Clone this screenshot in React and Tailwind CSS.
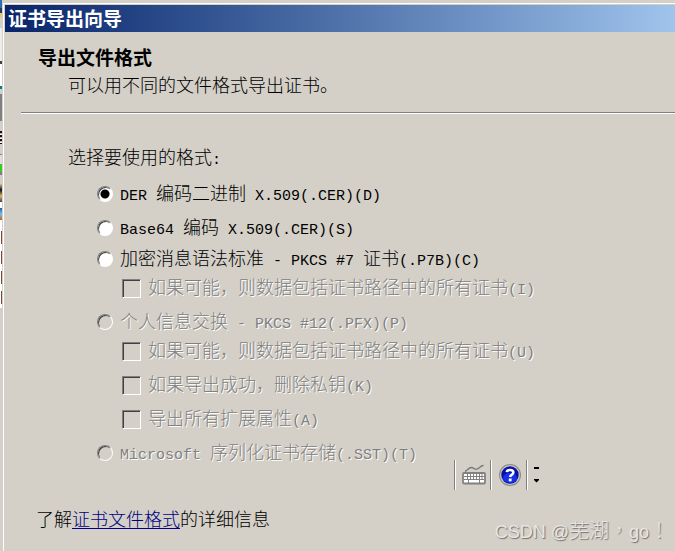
import React from "react";

const LATIN = /([\x20-\x7e]+)/;

// Latin runs are half as wide as the Chinese characters beside them.
function Mixed({ children }) {
  return children.split(LATIN).map((part, i) =>
    i % 2 ? (
      <span key={i} className="whitespace-pre font-['Liberation_Mono',monospace] text-[15px]">
        {part}
      </span>
    ) : (
      part
    )
  );
}

const OPTIONS = [
  { id: "der", type: "radio", label: "DER 编码二进制 X.509(.CER)(D)", checked: true, gap: "" },
  { id: "base64", type: "radio", label: "Base64 编码 X.509(.CER)(S)", gap: "mt-[14px]" },
  { id: "pkcs7", type: "radio", label: "加密消息语法标准 - PKCS #7 证书(.P7B)(C)", gap: "mt-[11px]" },
  { id: "pkcs7-chain", type: "checkbox", label: "如果可能，则数据包括证书路径中的所有证书(I)", disabled: true, gap: "mt-[9px]" },
  { id: "pfx", type: "radio", label: "个人信息交换 - PKCS #12(.PFX)(P)", disabled: true, gap: "mt-[14px]" },
  { id: "pfx-chain", type: "checkbox", label: "如果可能，则数据包括证书路径中的所有证书(U)", disabled: true, gap: "mt-[9px]" },
  { id: "pfx-delete", type: "checkbox", label: "如果导出成功，删除私钥(K)", disabled: true, gap: "mt-[14px]" },
  { id: "pfx-props", type: "checkbox", label: "导出所有扩展属性(A)", disabled: true, gap: "mt-[14px]" },
  { id: "sst", type: "radio", label: "Microsoft 序列化证书存储(.SST)(T)", disabled: true, gap: "mt-[14px]" },
];

function Option({ id, type, label, checked, disabled, gap }) {
  const radio = type === "radio";
  return (
    <div className={`flex h-5 items-center gap-[7px] ${gap} ${radio ? "pl-[92px]" : "pl-[117px]"}`}>
      <input
        id={id}
        type={type}
        name={radio ? "format" : id}
        defaultChecked={checked}
        disabled={disabled}
        className={
          radio
            ? "size-4 shrink-0 appearance-none rounded-full border border-t-[#808080] border-l-[#808080] border-r-white border-b-white bg-white shadow-[inset_1px_1px_0_#404040] checked:bg-[radial-gradient(circle,#000_4px,#fff_5px)] disabled:bg-[#d4d0c8]"
            : "size-[19px] shrink-0 appearance-none border border-t-[#808080] border-l-[#808080] border-r-white border-b-white bg-[#d4d0c8] shadow-[inset_1px_1px_0_#404040]"
        }
      />
      <label
        htmlFor={id}
        className={`whitespace-nowrap ${disabled ? "text-[#808080] [text-shadow:1px_1px_0_#fff]" : ""}`}
      >
        <Mixed>{label}</Mixed>
      </label>
    </div>
  );
}

// Sliver of the desktop that shows to the left of the dialog.
const SLIVERS = [
  ["h-[8px]", "bg-[#2a6fb0]"],
  ["h-[5px]", "bg-[#1c3f6e]"],
  ["h-[4px]", "bg-[#e8c860]"],
  ["h-[11px]", "bg-[#d4d0c8]"],
  ["h-[33px]", "bg-[#f0eeea]"],
  ["h-[3px]", "bg-[#404040]"],
  ["h-[22px]", "bg-white"],
  ["h-[3px]", "bg-[#008080]"],
  ["h-[5px]", "bg-[#d4d0c8]"],
  ["h-[27px]", "bg-[#808080]"],
  ["h-[10px]", "bg-[#d4d0c8]"],
  ["h-[13px]", "bg-[repeating-linear-gradient(#101030_0_2px,#d8a868_2px_3px,#fff_3px_4px)]"],
  ["h-[10px]", "bg-[#d4d0c8]"],
  ["h-[1px]", "bg-[#808080]"],
  ["h-[9px]", "bg-[#e0dede]"],
  ["h-[8px]", "bg-[#3cc828]"],
  ["h-[3px]", "bg-[#808080]"],
  ["h-[9px]", "bg-[#d4d0c8]"],
  ["h-[18px]", "bg-[linear-gradient(#e8c070,#101030,#e8b850,#304080)]"],
  ["h-[6px]", "bg-white"],
  ["h-[12px]", "bg-[linear-gradient(#2858a0,#70c0f0,#d06020)]"],
  ["h-[8px]", "bg-white"],
];

function Grip() {
  return <span className="h-[30px] w-[2px] border-l border-[#808080] bg-white" />;
}

function LanguageBar() {
  return (
    <div className="absolute top-[460px] left-[454px] flex items-center">
      <Grip />
      <button type="button" aria-label="键盘" className="ml-[5px]">
        <svg width="26" height="22" viewBox="0 0 26 22" fill="none">
          <path d="M4 7.5C6 7 7.5 3.5 10.5 3.5C13 3.5 13 5.5 15.5 5.2C18.5 5 19.5 1.2 22.5 1.5" stroke="#777" strokeWidth="1.3" />
          <rect x="2" y="9" width="22" height="10.5" rx="1" fill="#fff" stroke="#808080" strokeWidth="1.8" />
          <path d="M3 12.5H23M3 15.5H23" stroke="#808080" />
          <path d="M6.5 10V15M9.5 10V15M12.5 10V15M15.5 10V15M18.5 10V15M21 10V15M7.5 15V19M18.5 15V19" stroke="#808080" />
        </svg>
      </button>
      <span className="ml-[3px] flex">
        <Grip />
      </span>
      <button type="button" aria-label="帮助" className="ml-[6px]">
        <svg width="24" height="24" viewBox="0 0 24 24">
          <circle cx="12" cy="12" r="11" fill="#8b8b84" />
          <circle cx="12" cy="12" r="10" fill="#c9c7c0" />
          <circle cx="12" cy="12" r="8.7" fill="#0810a8" />
          <ellipse cx="12" cy="15" rx="7" ry="5" fill="#1830e8" />
          <path d="M8.8 9.2C9 6.2 15.3 6.2 15.3 9.4C15.3 11.8 12.2 11.8 12.2 14" fill="none" stroke="#fff" strokeWidth="2.6" />
          <rect x="10.8" y="15.5" width="2.8" height="2.8" fill="#fff" />
        </svg>
      </button>
      <span className="ml-[4px] flex">
        <Grip />
      </span>
      <button type="button" aria-label="选项" className="ml-[5px]">
        <svg width="7" height="16" viewBox="0 0 7 16">
          <path d="M1 0H6V2H1ZM1 12H6V13L3.5 15.5L1 13Z" fill="#000" />
        </svg>
      </button>
    </div>
  );
}

export default function App() {
  return (
    <div className="relative flex min-h-screen overflow-hidden bg-[#d4d0c8] font-['Noto_Sans_CJK_SC',sans-serif] text-[18px] leading-5 font-light text-black">
      <div className="flex w-[2px] shrink-0 flex-col">
        {SLIVERS.map(([height, fill], i) => (
          <span key={i} className={`shrink-0 ${height} ${fill}`} />
        ))}
        {[0, 1, 2, 3].map((i) => (
          <span key={i} className="h-5 shrink-0 bg-white pt-[3px]">
            <span className="ml-[1px] block h-[13px] bg-[#804838]" />
          </span>
        ))}
      </div>
      <div className="mt-[3px] ml-[1px] flex min-w-0 grow flex-col border-t border-l border-white pt-px pl-px">
        <header className="flex h-[27px] shrink-0 items-center bg-linear-to-r from-[#0a246a] to-[#a0c4ec] pb-[2px] pl-[3px]">
          <h1 className="text-[19px] font-bold text-white">证书导出向导</h1>
        </header>
        <main className="flex flex-col">
          <section className="pt-[15px] pl-[33px]">
            <h2 className="text-[19px] font-bold">导出文件格式</h2>
            <p className="mt-[7px] pl-[30px]">可以用不同的文件格式导出证书。</p>
          </section>
          <hr className="mt-[18px] ml-[16px] h-[2px] border-t border-b border-t-[#808080] border-b-white" />
          <fieldset className="mt-[32px]">
            <legend className="mb-[13px] pl-[63px]">
              <Mixed>选择要使用的格式:</Mixed>
            </legend>
            {OPTIONS.map((option) => (
              <Option key={option.id} {...option} />
            ))}
          </fieldset>
          <p className="mt-[45px] pl-[31px]">
            了解
            <a href="#formats" className="text-[#000080] underline underline-offset-2">
              证书文件格式
            </a>
            的详细信息
          </p>
        </main>
      </div>
      <LanguageBar />
      <p className="absolute right-[6px] bottom-[9px] flex items-baseline font-['Liberation_Sans','Noto_Sans_CJK_TC',sans-serif] text-[20px] text-[#e8e6e2] [text-shadow:1px_1px_1px_#707070]">
        <span className="whitespace-pre text-[18px]">CSDN @</span>
        <span>芜湖，</span>
        <span className="text-[18px]">go</span>
        <span>！</span>
      </p>
    </div>
  );
}
